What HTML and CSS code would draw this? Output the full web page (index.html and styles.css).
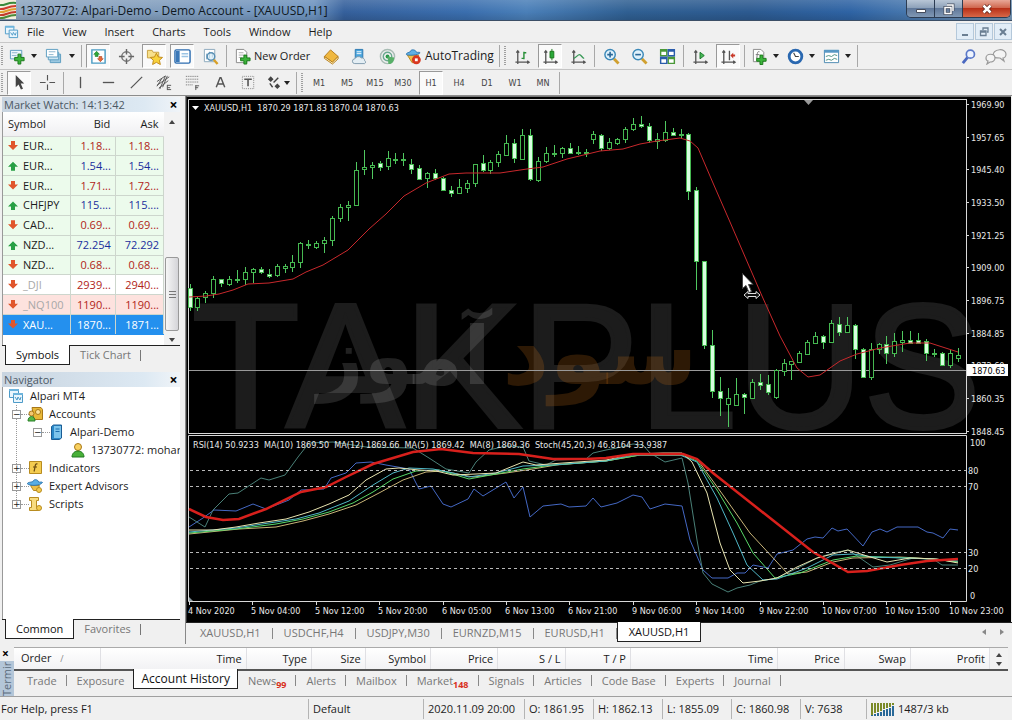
FILE: index.html
```html
<!DOCTYPE html>
<html lang="en">
<head>
<meta charset="utf-8">
<title>13730772: Alpari-Demo - Demo Account - [XAUUSD,H1]</title>
<link rel="stylesheet" href="styles.css">
</head>
<body>
<header class="titlebar">
  <svg class="logo" viewBox="0 0 16 19"><path fill="#f4efdc" d="M0 0h16v19H0z"/><g fill="none" stroke-width="2"><path stroke="#3a8a3a" d="M0 5c5 1 7-3 16-2"/><path stroke="#d23a2c" d="M0 9c5 1 7-3 16-3"/><path stroke="#e0a030" d="M0 12c5 1 7-3 16-3"/><path stroke="#c23a2c" d="M0 15c5 1 7-3 16-3"/><path stroke="#4a8a3a" d="M0 18c5 1 7-3 16-3"/></g></svg>
  <h1 class="title">13730772: Alpari-Demo - Demo Account - [XAUUSD,H1]</h1>
  <div class="winbtns">
    <button class="win" aria-label="Minimize"><svg viewBox="0 0 14 12"><path fill="#fff" stroke="#444c5c" d="M2.500 6.500h9v3h-9z"/></svg></button>
    <button class="win" aria-label="Restore"><svg viewBox="0 0 14 12"><path fill="none" stroke="#444c5c" stroke-width="3" d="M5 2h6v6M3 4.500h6v6H3z"/><path fill="none" stroke="#fff" stroke-width="1.500" d="M5 2h6v6M3 4.500h6v6H3z"/></svg></button>
    <button class="win close" aria-label="Close"><svg viewBox="0 0 14 12"><path stroke="#5a2018" stroke-width="4" d="M3.500 2.500l7 7m0-7l-7 7"/><path stroke="#fff" stroke-width="2.500" d="M3.500 2.500l7 7m0-7l-7 7"/></svg></button>
  </div>
</header>

<nav class="menubar">
  <svg class="appicon" viewBox="0 0 16 16"><path fill="#eaf6fd" stroke="#4e9bc8" d="M1.500 2.500h9v8h-9z"/><path fill="#6db4dc" d="M1 2h10v2H1z"/><path fill="#eaf6fd" stroke="#4e9bc8" d="M5.500 6.500h9v8h-9z"/><path fill="none" stroke="#4e9bc8" d="M7 9l2 3 1-3 2 3 1-3"/></svg>
  <button>File</button><button>View</button><button>Insert</button><button>Charts</button><button>Tools</button><button>Window</button><button>Help</button>
  <div class="mdibtns">
    <button aria-label="Minimize chart"><svg viewBox="0 0 12 12"><path stroke="#6a7e92" stroke-width="2" d="M3 9h6"/></svg></button>
    <button aria-label="Restore chart"><svg viewBox="0 0 12 12"><path fill="none" stroke="#6a7e92" stroke-width="1.300" d="M5 4V2h5v4H9M2.500 5h5.500v4.500H2.500zM2.500 6h5"/></svg></button>
    <button aria-label="Close chart"><svg viewBox="0 0 12 12"><path stroke="#6a7e92" stroke-width="2" d="M3 3l6 6m0-6L3 9"/></svg></button>
  </div>
</nav>

<div class="toolbar">
  <i class="grip"></i>
  <button class="drop" aria-label="New chart"><svg viewBox="0 0 18 18"><path fill="#eef7fc" stroke="#5a9cc0" d="M1.500 2.500h12v9h-12z"/><path stroke="#8ab4cc" d="M3 5h6M3 8h5"/><path fill="#3cb43c" stroke="#187818" d="M9.500 6.500h3v3.500H16v3.500h-3.500V17h-3v-3.500H6V10h3.500z"/></svg><i class="caret"></i></button>
  <button class="drop" aria-label="Profiles"><svg viewBox="0 0 18 18"><path fill="#9cc8e0" stroke="#5a9cc0" d="M5.500 6.500h11v9h-11z"/><path fill="#cfe6f2" stroke="#5a9cc0" d="M3.500 4.500h11v8h-11z"/><path fill="#fff" stroke="#5a9cc0" d="M1.500 1.500h12v8h-12z"/><path stroke="#8ab4cc" d="M4 4h7M4 7h5"/></svg><i class="caret"></i></button>
  <i class="sep"></i>
  <button class="pressed" aria-label="Market Watch"><svg viewBox="0 0 18 18"><path fill="#fff" stroke="#4a9cc4" stroke-width="1.500" d="M2 2h14v14H2z"/><path fill="#2ea838" stroke="#187828" stroke-width=".6" d="M7 3.500l3 3.200H8.500V9h-3V6.700H4z"/><path fill="#e86838" stroke="#a83818" stroke-width=".6" d="M11 14.500l3-3.200h-1.500V9h-3v2.300H8z"/></svg></button>
  <button aria-label="Data Window"><svg viewBox="0 0 18 18"><circle cx="9" cy="9" r="5" fill="none" stroke="#777" stroke-width="1.500"/><path stroke="#666" stroke-width="1.500" d="M9 1v6m0 4v6M1 9h6m4 0h6"/></svg></button>
  <button class="pressed" aria-label="Navigator"><svg viewBox="0 0 18 18"><path fill="#f7e08c" stroke="#c8a040" d="M1.500 2.500h5l1 2h6v6h-12z"/><path fill="#f8d23c" stroke="#c08818" d="M11 5.500l2 4 4.500.500-3.300 3 1 4.500-4.200-2.300-4 2.300.800-4.500-3.300-3 4.500-.500z"/></svg></button>
  <button class="pressed" aria-label="Terminal"><svg viewBox="0 0 18 18"><rect x="1" y="2" width="16" height="14" rx="1.500" fill="#fff" stroke="#2c6cb0" stroke-width="1.500"/><path fill="#3a78b8" d="M2 3h4v12H2z"/><path stroke="#9cc4e4" stroke-width="1.500" d="M8 6h7M8 9h7"/></svg></button>
  <button aria-label="Strategy Tester"><svg viewBox="0 0 18 18"><path fill="#fff" stroke="#8aa8bc" d="M2.500 1.500h11v13h-11z"/><path stroke="#6898b8" d="M5 12V6m3 5V4m3 6V5"/><circle cx="9.500" cy="9" r="4" fill="#d8ecf8" fill-opacity=".7" stroke="#5a90b4" stroke-width="1.500"/><path stroke="#d8a028" stroke-width="2.500" d="M12.500 12.500l4 4.500"/></svg></button>
  <i class="sep"></i>
  <button class="label order"><svg viewBox="0 0 18 18"><path fill="#fff" stroke="#888" d="M2.500 1.500h8l3 3v11h-11z"/><path stroke="#aaa" d="M5 5h5M5 7.500h6M5 10h3"/><path fill="#3cb43c" stroke="#187818" d="M10.500 7.500h3v3H17v3h-3.500V17h-3v-3.500H7v-3h3.500z"/></svg>New Order</button>
  <button aria-label="MetaEditor"><svg viewBox="0 0 18 18"><path fill="#f0b840" stroke="#b47a18" d="M8 2l8 7-6 6-8.500-6z"/><path fill="#fff0b8" stroke="#b47a18" d="M1.500 9L10 15l6-6v2.500l-6 5.500-8.500-6z"/></svg></button>
  <button aria-label="Market"><svg viewBox="0 0 18 18"><path fill="#4aa4dc" stroke="#2a78b0" d="M4.500 1.500h8v10h-8z"/><path stroke="#fff" d="M6 4h5M6 6h5"/><path fill="#e4eef4" stroke="#7f9aac" d="M4 16.500a2.500 2.500 0 0 1 0-5 4 3.500 0 0 1 7-1 3 3 0 0 1 3.500 3 1.700 1.700 0 0 1 0 3z"/></svg></button>
  <button aria-label="Signals"><svg viewBox="0 0 18 18"><g fill="none" stroke-width="1.500"><circle cx="9" cy="9" r="7.500" stroke="#a8bcb4"/><circle cx="9" cy="9" r="4.500" stroke="#6aa890"/></g><circle cx="9" cy="9" r="2" fill="#289848"/><path fill="#58b068" d="M9 9l1 8c5 0 6-4 6-7z"/></svg></button>
  <button class="label auto"><svg viewBox="0 0 18 18"><path fill="#f0c048" stroke="#b88a20" d="M2.500 7.500h12l-3 8h-4z"/><path fill="#60b0e4" stroke="#3278b0" d="M1.500 7C3 8 14 8 16 5c-1-1-3 0-4-.500-.500-3-6-3.500-6.500-.500C4 5 1 5 1.500 7z"/><circle cx="12" cy="12.500" r="4.700" fill="#d83820"/><path fill="#fff" d="M10.500 11h3v3h-3z"/></svg>AutoTrading</button>
  <i class="sep"></i>
  <i class="grip"></i>
  <button aria-label="Bar Chart"><svg viewBox="0 0 18 18"><path fill="none" stroke="#555" stroke-width="1.400" d="M4 3v14M1.500 15H16M2.500 5L4 3l1.500 2M14 13.500l2 1.500-2 1.500"/><path fill="none" stroke="#289038" stroke-width="1.500" d="M10.500 12V4M10.500 5H13M8 11h2.500"/></svg></button>
  <button class="pressed" aria-label="Candlesticks"><svg viewBox="0 0 18 18"><path fill="none" stroke="#555" stroke-width="1.400" d="M4 3v14M1.500 15H16M2.500 5L4 3l1.500 2M14 13.500l2 1.500-2 1.500"/><path stroke="#187818" d="M10.500 1v12"/><path fill="#28a838" stroke="#187818" d="M8.500 3.500h4v7h-4z"/></svg></button>
  <button aria-label="Line Chart"><svg viewBox="0 0 18 18"><path fill="none" stroke="#555" stroke-width="1.400" d="M4 3v14M1.500 15H16M2.500 5L4 3l1.500 2M14 13.500l2 1.500-2 1.500"/><path fill="none" stroke="#3a9a58" stroke-width="1.400" d="M4 11c3-1 4-4 6-4s3 4 5 4"/></svg></button>
  <i class="sep"></i>
  <button aria-label="Zoom In"><svg viewBox="0 0 18 18"><path stroke="#d0a030" stroke-width="3" d="M11.500 11.500l5 5"/><circle cx="7.500" cy="7" r="5.500" fill="#e0f2fc" stroke="#3a88b8" stroke-width="1.500"/><path stroke="#2a6898" stroke-width="1.700" d="M4.500 7h6m-3-3v6"/></svg></button>
  <button aria-label="Zoom Out"><svg viewBox="0 0 18 18"><path stroke="#d0a030" stroke-width="3" d="M11.500 11.500l5 5"/><circle cx="7.500" cy="7" r="5.500" fill="#e0f2fc" stroke="#3a88b8" stroke-width="1.500"/><path stroke="#2a6898" stroke-width="1.700" d="M4.500 7h6"/></svg></button>
  <button aria-label="Tile Windows"><svg viewBox="0 0 18 18"><path fill="#4a9838" d="M1 1h8v8H1zM9 9h8v8H9z"/><path fill="#2a5cac" d="M9 1h8v8H9zM1 9h8v8H1z"/><path fill="#fff" d="M2.500 4h5v3.500h-5zM10.500 4h5v3.500h-5zM2.500 12h5v3.500h-5zM10.500 12h5v3.500h-5z"/></svg></button>
  <i class="sep"></i>
  <button aria-label="Auto Scroll"><svg viewBox="0 0 18 18"><path fill="none" stroke="#555" stroke-width="1.400" d="M4 3v14M1.500 15H16M2.500 5L4 3l1.500 2M14 13.500l2 1.500-2 1.500"/><path fill="#48b858" stroke="#187828" d="M8.500 4.500v7l4.500-3.500z"/></svg></button>
  <button class="pressed" aria-label="Chart Shift"><svg viewBox="0 0 18 18"><path fill="none" stroke="#555" stroke-width="1.400" d="M4 3v14M1.500 15H16M2.500 5L4 3l1.500 2M14 13.500l2 1.500-2 1.500M10 3v10"/><path fill="#c83828" d="M11 8l3-3v2h2v2h-2v2z"/></svg></button>
  <i class="sep"></i>
  <button class="drop" aria-label="Indicators"><svg viewBox="0 0 18 18"><path fill="#fff" stroke="#888" d="M2.500 1.500h8l3 3v10h-11z"/><path fill="none" stroke="#777" d="M9 4c-3-1-2 3-3 7M5 7h4"/><path fill="#3cb43c" stroke="#187818" d="M9.500 7.500h3V11H16v3h-3.500v3.500h-3V14H6v-3h3.500z"/></svg><i class="caret"></i></button>
  <button class="drop" aria-label="Periods"><svg viewBox="0 0 18 18"><circle cx="9" cy="9" r="6.700" fill="#fff" stroke="#2a68b0" stroke-width="3"/><path fill="none" stroke="#444" stroke-width="1.200" d="M7 5l2 4h3.500"/></svg><i class="caret"></i></button>
  <button class="drop" aria-label="Templates"><svg viewBox="0 0 18 18"><path fill="#fff" stroke="#4a88b0" d="M1.500 2.500h15v13h-15z"/><path fill="#5898c4" d="M1 2h16v3H1z"/><path fill="none" stroke="#4a9080" d="M3 9l3-1 3 1 3-2 3 1M3 13l3-1 3 1 3-2 3 1"/></svg><i class="caret"></i></button>
  <i class="sep"></i>
  <div class="tools">
    <button aria-label="Search"><svg viewBox="0 0 18 18"><path stroke="#4a68c0" stroke-width="3" d="M8 10l-5 6"/><circle cx="11" cy="6.500" r="4.300" fill="#eef4ff" stroke="#5a78c8" stroke-width="1.800"/></svg></button>
    <button aria-label="Community"><svg class="wide" viewBox="0 0 22 18"><g fill="#f4f4f4" stroke="#999" stroke-width="1.200"><path d="M8 9c0-8 13-8 13-2 0 3-2 4-3 4l1 3-4-3c-4 0-7 0-7-2z"/><path d="M1 11c0-5 9-5 9 0 0 3-3 4-5 4l-3 2 1-3c-1 0-2-1-2-3z"/></g></svg></button>
  </div>
</div>

<div class="toolbar second">
  <i class="grip"></i>
  <button class="pressed" aria-label="Cursor"><svg viewBox="0 0 18 18"><path fill="#444" d="M5 1v13l3-3 2.500 5.500 2.200-1L10.300 10H14z"/></svg></button>
  <button aria-label="Crosshair"><svg viewBox="0 0 18 18"><path stroke="#555" stroke-width="1.200" d="M9 1v6m0 4v6M1 9h6m4 0h6"/></svg></button>
  <i class="sep"></i>
  <button aria-label="Vertical line"><svg viewBox="0 0 18 18"><path stroke="#555" stroke-width="1.400" d="M9 3v12"/></svg></button>
  <button aria-label="Horizontal line"><svg viewBox="0 0 18 18"><path stroke="#555" stroke-width="1.400" d="M3 9h12"/></svg></button>
  <button aria-label="Trendline"><svg viewBox="0 0 18 18"><path stroke="#555" stroke-width="1.300" d="M3 15L15 3"/></svg></button>
  <button aria-label="Equidistant channel"><svg viewBox="0 0 18 18"><path stroke="#555" d="M1 8l9-6M1 12l13-9M3 15l10-8M4 16l6-14M7 14l5-12M1 13l5-8M12 11.500v5.500M12 12h4M12 14.500h3M12 16.500h4"/></svg></button>
  <button aria-label="Fibonacci"><svg viewBox="0 0 18 18"><path stroke="#666" stroke-dasharray="1 1" d="M2 2.500h13M2 5.500h13M2 8.500h13M2 11.500h8"/><path stroke="#555" d="M12.500 12v5M12 12.500h4M12 14.500h3"/></svg></button>
  <button aria-label="Text"><svg viewBox="0 0 18 18"><path fill="none" stroke="#555" stroke-width="1.500" d="M4.500 14L8.500 4h1l4 10M6 10.500h6"/></svg></button>
  <button aria-label="Text label"><svg viewBox="0 0 18 18"><path fill="none" stroke="#888" stroke-dasharray="1 1" d="M2.500 2.500h12v13h-12z"/><path stroke="#555" stroke-width="1.700" d="M4.500 5.500h8M8.500 5v8"/></svg></button>
  <button class="drop shapes" aria-label="Arrows"><svg viewBox="0 0 18 18"><path fill="#444" d="M5 2.500L8 5.500 5 8.500 2 5.500zM12 10l3 3-3 3-3-3z"/><path fill="none" stroke="#444" stroke-width="1.500" d="M8 9l5-5M4 10l3 4"/></svg><i class="caret"></i></button>
  <i class="sep"></i>
  <i class="grip"></i>
  <button class="tf">M1</button><button class="tf">M5</button><button class="tf">M15</button><button class="tf">M30</button><button class="tf pressed">H1</button><button class="tf">H4</button><button class="tf">D1</button><button class="tf">W1</button><button class="tf">MN</button>
  <i class="sep"></i>
</div>

<main class="work">
  <aside class="side">
    <section class="panel">
      <header class="phead"><h2>Market Watch: 14:13:42</h2><button aria-label="Close Market Watch">×</button></header>
      <div class="pbody watch">
        <table class="quotes">
          <colgroup><col class="c1"><col class="c2"><col class="c3"></colgroup>
          <thead><tr><th>Symbol</th><th>Bid</th><th>Ask</th></tr></thead>
          <tbody>
            <tr class="dn"><td>EUR...</td><td>1.18...</td><td>1.18...</td></tr>
            <tr class="up"><td>EUR...</td><td>1.54...</td><td>1.54...</td></tr>
            <tr class="dn"><td>EUR...</td><td>1.71...</td><td>1.72...</td></tr>
            <tr class="up"><td>CHFJPY</td><td>115....</td><td>115....</td></tr>
            <tr class="dn"><td>CAD...</td><td>0.69...</td><td>0.69...</td></tr>
            <tr class="up"><td>NZD...</td><td>72.254</td><td>72.292</td></tr>
            <tr class="dn"><td>NZD...</td><td>0.68...</td><td>0.68...</td></tr>
            <tr class="dn off"><td>_DJI</td><td>2939...</td><td>2940...</td></tr>
            <tr class="dn off pink"><td>_NQ100</td><td>1190...</td><td>1190...</td></tr>
            <tr class="dn sel"><td>XAU...</td><td>1870...</td><td>1871...</td></tr>
          </tbody>
        </table>
        <div class="vscroll"><i class="tri up"></i><div class="track"><div class="thumb"></div></div><i class="tri down"></i></div>
      </div>
      <div class="ptabs"><button class="on">Symbols</button><button>Tick Chart</button></div>
    </section>
    <section class="panel grow">
      <header class="phead"><h2>Navigator</h2><button aria-label="Close Navigator">×</button></header>
      <ul class="pbody tree">
        <li class="root"><svg viewBox="0 0 16 16"><path fill="#eaf6fd" stroke="#4e9bc8" d="M1.500 1.500h9v8h-9z"/><path fill="#6db4dc" d="M1 1h10v2H1z"/><path fill="#eaf6fd" stroke="#4e9bc8" d="M5.500 5.500h9v9h-9z"/><path fill="#6db4dc" d="M5 5h10v2H5z"/><path fill="none" stroke="#4e9bc8" d="M7 9l2 3 1-3 2 3 1-3"/></svg>Alpari MT4</li>
        <li class="l1"><i class="box">−</i><svg viewBox="0 0 16 16"><path fill="#e8b838" stroke="#a87818" d="M5 1.500h9l1.500 2v10H7z"/><circle cx="11" cy="6" r="2.500" fill="#fbe49c" stroke="#a87818"/><circle cx="4.500" cy="7.500" r="2.500" fill="#f4c870" stroke="#a87818"/><path fill="#58b848" stroke="#288028" d="M1 15c0-6 7-6 7 0z"/></svg>Accounts</li>
        <li class="l2"><i class="box">−</i><svg viewBox="0 0 16 16"><path fill="#2a88c8" stroke="#1a5c94" d="M3.500 2.500l2-1.500h8v13l-2 1.500h-8z"/><path fill="#7cc4ec" d="M6 2h7v12H6z"/><path stroke="#1a6cac" d="M7.500 5h4M7.500 7.500h4"/></svg>Alpari-Demo</li>
        <li class="l3"><svg viewBox="0 0 16 16"><circle cx="8" cy="5" r="3.500" fill="#f8d060" stroke="#a87818"/><path fill="#48b038" stroke="#207820" d="M2 15c0-8 12-8 12 0z"/></svg>13730772: mohar</li>
        <li class="l1"><i class="box">+</i><svg viewBox="0 0 16 16"><path fill="#f4cc50" stroke="#b88c20" d="M2.500 1.500h12v12h-12z"/><path fill="none" stroke="#6a4a10" stroke-width="1.200" d="M10.500 4c-3-1-2 3-3.500 7.500M6 7h4"/></svg>Indicators</li>
        <li class="l1"><i class="box">+</i><svg viewBox="0 0 16 16"><path fill="#f0c048" stroke="#b88a20" d="M3.500 7.500h9l-2 5h-4z"/><path fill="#5aaee4" stroke="#3278b0" d="M.500 6C3 8 13 8 15.500 4.500c-1-1-3 0-4-.500-.500-3-5-3-5.500-.500C4 4.500 0 4 .500 6z"/><circle cx="12" cy="12" r="2.500" fill="#f4cc50" stroke="#b88c20"/></svg>Expert Advisors</li>
        <li class="l1"><i class="box">+</i><svg viewBox="0 0 16 16"><path fill="#f8dc80" stroke="#b88c20" d="M2.500 1.500h9v3h-2v7h2v3h-9v-3h2v-7h-2z"/><circle cx="12" cy="12" r="2.500" fill="#f4cc50" stroke="#b88c20"/></svg>Scripts</li>
      </ul>
      <div class="ptabs"><button class="on">Common</button><button>Favorites</button></div>
    </section>
  </aside>

  <section class="chartwin">
    <div class="chartbox">
      <svg id="chart" viewBox="187 97 824 525" role="img" aria-label="XAUUSD H1 candlestick chart">
        <g class="mark">
          <text class="latin" x="192" y="427">TAKPLUS</text>
          <text class="fa gold" x="600" y="384">سود</text>
          <text class="fa grey" x="404" y="384">آموز</text>
        </g>
        <path class="frame" d="M188.500 433.500v-334h777.500M188.500 433.500h778M966.500 99v335M188.500 601.500v-166h778v166z"/>
        <path class="bid" d="M189 370.500h777"/>
        <path class="shift" d="M804 100h9l-4.500 5z"/>
        <g id="candles"></g>
        <g id="lines"></g>
        <path class="level" d="M190 470.500h776M190 486.500h776M190 552.500h776M190 568.500h776"/>
        <path class="caretdown" d="M192 106h7l-3.500 4z"/>
        <g class="txt">
          <text x="204" y="111" xml:space="preserve">XAUUSD,H1  1870.29 1871.83 1870.04 1870.63</text>
          <text x="193" y="448" xml:space="preserve">RSI(14) 50.9233  MA(10) 1869.50  MA(12) 1869.66  MA(5) 1869.42  MA(8) 1869.36  Stoch(45,20,3) 46.8164 33.9387</text>
        </g>
        <g class="txt" id="axes"></g>
        <path class="tag" d="M967 364h41v12h-41z"/>
        <text class="tagtxt" x="972" y="374">1870.63</text>
        <path class="corner" d="M189 597v4h4z"/>
        <g class="pointer"><path d="M742.500 273.500v15l3.500-3 3 7 2.500-1-3-7h4.500z"/><path class="resize" d="M744 295l4-3.500v2h8v-2l4 3.500-4 3.500v-2h-8v2z"/></g>
      </svg>
    </div>
    <div class="charttabs">
      <button>XAUUSD,H1</button><button>USDCHF,H4</button><button>USDJPY,M30</button><button>EURNZD,M15</button><button>EURUSD,H1</button><button class="on">XAUUSD,H1</button>
      <div class="arrows"><i class="tri left"></i><i class="tri right"></i></div>
    </div>
  </section>
</main>

<section class="terminal">
  <div class="tside"><button aria-label="Close Terminal">×</button><span>Termir</span></div>
  <div class="tmain">
    <div class="thead">
      <table class="orders">
        <colgroup><col style="width:8.900%"><col style="width:14.900%"><col style="width:6.700%"><col style="width:5.500%"><col style="width:6.700%"><col style="width:6.900%"><col style="width:6.900%"><col style="width:6.700%"><col style="width:15.100%"><col style="width:6.800%"><col style="width:6.800%"><col style="width:8.100%"></colgroup>
        <thead><tr><th>Order <small>/</small></th><th>Time</th><th>Type</th><th>Size</th><th>Symbol</th><th>Price</th><th>S / L</th><th>T / P</th><th>Time</th><th>Price</th><th>Swap</th><th>Profit</th></tr></thead>
      </table>
      <div class="spin"><i class="tri up"></i><i class="tri down"></i></div>
    </div>
    <div class="ttabs">
      <button>Trade</button><button>Exposure</button><button class="on">Account History</button><button>News<sub>99</sub></button><button>Alerts</button><button>Mailbox</button><button>Market<sub>148</sub></button><button>Signals</button><button>Articles</button><button>Code Base</button><button>Experts</button><button>Journal</button>
    </div>
  </div>
</section>

<footer class="status">
  <span class="help">For Help, press F1</span>
  <span class="s-def">Default</span>
  <span class="s-date">2020.11.09 20:00</span>
  <span class="s-n">O: 1861.95</span>
  <span class="s-n">H: 1862.13</span>
  <span class="s-n">L: 1855.09</span>
  <span class="s-n">C: 1860.98</span>
  <span class="s-v">V: 7638</span>
  <span class="s-net"><svg viewBox="0 0 24 14"><path stroke="#7a8a28" stroke-width="2" d="M1 1v12M4 1v10M7 1v9M10 1v8M13 1v6M16 1v5M19 1v4M22 1v2"/><path stroke="#286898" stroke-width="2" d="M1 13v1M4 12v2M7 11v3M10 10v4M13 8v6M16 7v7M19 6v8M22 4v10"/></svg>1487/3 kb</span>
</footer>
<script src="chart.js"></script>
</body>
</html>
```

FILE: styles.css
```css
* { box-sizing: border-box; }

body {
  margin: 0;
  min-height: 100vh;
  display: flex;
  flex-direction: column;
  background: #f0f0f0;
  color: #1c1c1c;
  font: 11px/14px "Open Sans", "Noto Sans", sans-serif;
  overflow: hidden;
}

button {
  margin: 0;
  padding: 0;
  border: 0;
  background: none;
  color: inherit;
  font: inherit;
  white-space: nowrap;
}

svg { display: block; }
h1, h2 { margin: 0; font: inherit; white-space: nowrap; }

.tri { display: block; width: 0; height: 0; border: 3px solid transparent; }
.tri.up { border-top: 0; border-bottom: 4px solid #444; }
.tri.down { border-bottom: 0; border-top: 4px solid #444; }
.tri.left { border-left: 0; border-right: 4px solid #888; }
.tri.right { border-right: 0; border-left: 4px solid #888; }

/* Title bar */
.titlebar {
  display: flex;
  align-items: flex-start;
  height: 21px;
  border-bottom: 1px solid #3c4f66;
  background:
    linear-gradient(180deg, rgba(255,255,255,.15), rgba(255,255,255,0) 60%, rgba(0,0,0,.12)),
    linear-gradient(90deg, #8ea6c0 0, #7f9cbd 18%, #6d93bf 31%, #35609c 34%, #3a6eae 46%, #4a7fb8 52%, #2f5f92 62%, #2c5a90 74%, #2e63a4 84%, #4878ae 90%, #7898b8 100%);
}
.logo { width: 16px; height: 19px; }
.title { margin-left: 4px; font-size: 12px; line-height: 21px; color: #101820; flex: 1; }
.winbtns { display: flex; height: 18px; margin-right: 1px; border: 1px solid #2c3c52; border-top: 0; border-radius: 0 0 5px 5px; overflow: hidden; }
.win { width: 28px; display: grid; place-items: center; background: linear-gradient(#b8c6d6, #8ea2ba 45%, #60789a 50%, #8098b4); border-right: 1px solid #2c3c52; }
.win svg { width: 14px; height: 12px; }
.win.close { width: 47px; border: 0; background: linear-gradient(#e8a898, #d06850 45%, #b83018 50%, #d86848); }

/* Menu */
.menubar { display: flex; align-items: center; height: 22px; padding-left: 4px; gap: 18px; border-bottom: 1px solid #c8c8c8; }
.appicon { width: 15px; height: 15px; margin-right: -10px; }
.mdibtns { display: flex; margin-left: auto; gap: 1px; }
.mdibtns button { width: 18px; height: 17px; display: grid; place-items: center; border: 1px solid #b4c8da; background: #e2edf7; }
.mdibtns svg { width: 12px; height: 12px; }

/* Toolbars */
.toolbar { display: flex; align-items: center; gap: 4px; height: 27px; padding-left: 1px; border-bottom: 1px solid #c4c4c4; }
.toolbar.second { height: 26px; border-bottom-color: #8c8c8c; }
.grip { width: 2px; height: 20px; background: repeating-linear-gradient(#a0a0a0 0 1px, transparent 1px 2px); }
.sep { width: 1px; height: 22px; background: #a8a8a8; }
.toolbar button { flex: none; display: flex; align-items: center; justify-content: center; width: 24px; height: 24px; }
.toolbar svg { flex: none; width: 17px; height: 17px; }
.toolbar .pressed { background: #fafafa; border: 1px solid #fff; border-top-color: #999; border-left-color: #999; }
.toolbar .drop { width: 32px; justify-content: space-between; padding: 0 2px; }
.toolbar .drop[aria-label="Profiles"] { width: 34px; }
.toolbar .shapes { width: 28px; }
.toolbar .label { gap: 3px; justify-content: flex-start; }
.toolbar .order { width: 84px; padding-left: 3px; }
.toolbar .auto { width: 92px; padding-left: 2px; font-size: 12px; }
.caret { border: 3px solid transparent; border-top: 4px solid #222; border-bottom: 0; }
.tools { display: flex; gap: 4px; margin: 0 4px 0 auto; }
.toolbar .wide { width: 22px; height: 18px; }
.toolbar .tf { font-family: "DejaVu Sans Condensed", "Noto Sans", sans-serif; font-size: 9px; color: #444; }

/* Work area */
.work { flex: 1; display: flex; min-height: 0; }
.side { width: 186px; flex: none; display: flex; flex-direction: column; gap: 7px; padding: 1px 5px 5px 2px; border-right: 1px solid #888; }
.panel { display: flex; flex-direction: column; }
.panel.grow { flex: 1; }
.phead { display: flex; align-items: center; justify-content: space-between; height: 15px; padding: 0 2px; background: linear-gradient(90deg, #c8d4e0, #dde9f3 80%, #f0f4f8); color: #4c5864; }
.phead button { width: 9px; color: #000; font-size: 14px; font-weight: 700; line-height: 12px; }
.pbody { background: #fff; border-left: 1px solid #999; }
.watch { display: flex; height: 233px; }
.quotes { flex: 1; height: 223px; border-collapse: collapse; table-layout: fixed; }
.quotes .c1 { width: 42%; }
.quotes .c2 { width: 28%; }
.quotes th { height: 24px; padding: 0 5px; font-weight: 400; text-align: right; background: linear-gradient(#fff, #f0f0f2); border-bottom: 1px solid #d8d8d8; }
.quotes th:first-child { text-align: left; }
.quotes td { padding: 0 4px 0 3px; text-align: right; line-height: 12px; background: #ecfbec; border-bottom: 1px solid #cdd6cd; border-right: 1px solid #cdd6cd; white-space: nowrap; }
.quotes td:first-child { text-align: left; }
.quotes td:first-child::before { content: ""; display: inline-block; width: 10px; height: 10px; margin: 0 5px 0 2px; vertical-align: -1px; background: #e0562c; clip-path: polygon(30% 0, 70% 0, 70% 40%, 100% 40%, 50% 90%, 0 40%, 30% 40%); }
.quotes .up td:first-child::before { background: #28a045; clip-path: polygon(50% 10%, 100% 60%, 70% 60%, 70% 100%, 30% 100%, 30% 60%, 0 60%); }
.dn td + td { color: #b02418; }
.up td + td { color: #1a2e9c; }
.off td:first-child { color: #a8a8a8; }
.quotes .off td { background: #fff; }
.quotes .pink td { background: #fde2de; }
.quotes .sel td { background: #2490ee; color: #fff; border-bottom-color: #2490ee; }
.vscroll { width: 16px; padding: 8px 1px 3px; display: flex; flex-direction: column; align-items: center; background: #f2f2f2; }
.track { flex: 1; width: 100%; display: flex; flex-direction: column; justify-content: flex-end; padding-bottom: 7px; }
.thumb { height: 74px; border: 1px solid #999; border-radius: 2px; background: linear-gradient(transparent 33px, #777 33px 34px, transparent 34px 36px, #777 36px 37px, transparent 37px 39px, #777 39px 40px, transparent 40px) 50% 0 / 7px 100% no-repeat, linear-gradient(90deg, #f6f6f6, #d4d4d8); }
.ptabs { display: flex; height: 20px; padding-left: 3px; border-top: 1px solid #222; color: #777; }
.ptabs button { padding: 0 10px; height: 18px; position: relative; }
.ptabs button::after { content: ""; position: absolute; right: 0; top: 4px; height: 11px; border-right: 1px solid #777; }
.ptabs .on, .charttabs .on, .ttabs .on { color: #111; background: #fff; border: 1px solid #222; border-top: 0; }
.ptabs .on { margin-top: -1px; height: 20px; }
.ptabs .on::after { content: none; }

.tree { flex: 1; margin: 0; padding: 0; list-style: none; overflow: hidden; background: repeating-linear-gradient(#999 0 1px, #fff 1px 2px) 13px 18px / 1px 100px no-repeat, #fff; }
.tree li { display: flex; align-items: center; height: 18px; gap: 6px; white-space: nowrap; }
.tree svg { width: 16px; height: 16px; flex: none; }
.tree .root { padding-left: 5px; }
.tree .l1 { padding-left: 9px; }
.tree .l2 { padding-left: 30px; }
.tree .l3 { padding-left: 67px; gap: 5px; }
.box { width: 9px; height: 9px; flex: none; border: 1px solid #999; background: #fff; font: 9px/7px "DejaVu Sans", sans-serif; text-align: center; position: relative; }
.box::after { content: ""; position: absolute; left: 8px; top: 3px; width: 8px; border-top: 1px dotted #999; }

/* Chart */
.chartwin { flex: 1; min-width: 0; display: flex; flex-direction: column; }
.chartbox { flex: 1; min-height: 0; margin-right: 1px; background: #000; border-top: 1px solid #777; border-left: 1px solid #333; }
#chart { width: 100%; height: 100%; }
.latin { font: 176px "Liberation Sans", sans-serif; fill: #1c1c1c; stroke: #1c1c1c; stroke-width: 4; }
.fa { font: 700 92px "DejaVu Sans", sans-serif; text-anchor: middle; }
.gold { fill: rgba(190,105,20,.24); }
.grey { font-size: 80px; fill: rgba(255,255,255,.13); }
.frame { fill: none; stroke: #d8d8d8; }
.bid { stroke: #9a9a9a; }
.shift { fill: #9a9a9a; }
.caretdown { fill: #fff; }
.level { stroke: #b8b8b8; stroke-dasharray: 3 3; }
.txt text, .tagtxt { font: 9px "DejaVu Sans Condensed", "Noto Sans", sans-serif; fill: #e8e8e8; }
.tick { stroke: #d8d8d8; }
.tag { fill: #fff; }
.tagtxt { fill: #000; }
.corner { fill: #8898a0; }
.candle { stroke: #45b850; fill: #000; }
.candle.full { fill: #d8ffe0; }
.candle.wick { stroke: #50c860; }
.line { fill: none; stroke-width: 1; }
.pointer { fill: #fff; stroke: #444; stroke-width: 1; }
.resize { fill: #111; stroke: #e0e0e0; }
.charttabs { display: flex; height: 22px; padding-left: 3px; border-top: 1px solid #222; color: #777; }
.charttabs button { height: 20px; padding: 0 12px 0 11px; position: relative; }
.charttabs button:not(.on)::after { content: ""; position: absolute; right: 0; top: 5px; height: 11px; border-right: 1px solid #888; }
.charttabs .on { margin-top: -1px; height: 20px; padding: 0 11px; }
.arrows { margin: 6px 8px 0 auto; display: flex; gap: 14px; }

/* Terminal */
.terminal { display: flex; height: 50px; margin-top: 3px; border-bottom: 1px solid #a0a0a0; }
.tside { width: 14px; background: linear-gradient(#f0f0f0 14px, #b4c6d8 14px); color: #5a6a7a; }
.tside button { display: block; width: 11px; height: 14px; line-height: 14px; font-size: 12px; font-weight: 700; color: #000; }
.tside span { display: block; height: 35px; writing-mode: vertical-rl; transform: rotate(180deg); line-height: 14px; }
.tmain { flex: 1; margin-right: 4px; }
.thead { display: flex; height: 24px; background: linear-gradient(#fff, #f2f2f4); border-top: 1px solid #aaa; border-bottom: 2px solid #555; }
.orders { flex: 1; table-layout: fixed; border-collapse: collapse; }
.orders th { padding: 0 4px 0 7px; font-weight: 400; text-align: right; white-space: nowrap; border-right: 1px solid #e0e0e4; }
.orders th:first-child { text-align: left; }
.orders small { margin-left: 6px; color: #888; font-size: 9px; }
.spin { width: 18px; display: flex; flex-direction: column; align-items: center; justify-content: space-between; padding: 5px 0 3px; background: #f2f2f2; }
.ttabs { display: flex; color: #777; padding-left: 3px; }
.ttabs button { height: 19px; padding: 0 10px; position: relative; }
.ttabs button:not(.on)::after { content: ""; position: absolute; right: 0; top: 4px; height: 11px; border-right: 1px solid #888; }
.ttabs button:nth-child(2) { padding-right: 9px; }
.ttabs button:nth-child(2)::after { content: none; }
.ttabs .on { margin-top: -2px; height: 20px; padding: 0 7px; font-size: 12px; }
.ttabs sub { color: #d83020; font-size: 9px; font-weight: 700; line-height: 0; }

/* Status bar */
.status { display: flex; align-items: center; height: 23px; padding-left: 1px; }
.status span { height: 20px; line-height: 20px; border-left: 1px solid #b4b4b4; padding-left: 4px; white-space: nowrap; }
.status .help { flex: 1; border: 0; padding: 0; }
.s-def { width: 115px; }
.s-date { width: 101px; }
.s-n { width: 69px; }
.s-v { width: 66px; }
.status .s-net { width: 146px; display: flex; align-items: center; gap: 3px; }
.s-net svg { width: 24px; height: 14px; }
```

FILE: chart.js
```js
const NS = 'http://www.w3.org/2000/svg';
const add = (parent, tag, attrs, text) => {
  const el = document.createElementNS(NS, tag);
  for (const k in attrs) el.setAttribute(k, attrs[k]);
  if (text) el.textContent = text;
  document.getElementById(parent).appendChild(el);
};

// Each candle: high, body top, body bottom, low, 1 when the candle is bearish.
const candles = [
  [284,288,307,311,1],[296,298,307,311,0],[291,293,297,303,0],[276,279,293,298,0],[279,279,283,287,1],[276,279,284,286,0],[270,279,280,283,0],[267,272,279,285,0],
  [268,269,272,283,0],[267,269,272,274,1],[269,274,276,278,1],[264,266,275,277,0],[264,266,268,273,0],[255,262,267,272,0],[242,243,262,268,0],[240,244,245,249,1],
  [241,243,247,249,0],[237,240,243,253,0],[216,218,240,246,0],[204,207,218,222,0],[201,205,207,221,0],[162,170,205,205,0],[150,167,169,175,0],[162,165,167,179,0],
  [161,163,167,171,1],[151,158,166,170,0],[153,159,160,164,1],[153,159,160,166,0],[159,164,169,174,1],[165,168,179,180,1],[172,173,178,188,0],[169,173,178,180,1],
  [177,178,190,191,1],[186,190,193,197,1],[179,187,193,194,0],[180,183,188,193,0],[164,164,183,187,0],[155,163,170,172,1],[160,162,170,174,0],[151,154,162,167,0],
  [135,143,155,156,0],[139,143,158,163,1],[129,135,159,160,0],[129,135,179,181,1],[157,161,180,182,0],[147,153,161,163,0],[145,153,154,157,0],[147,148,153,158,0],
  [143,148,153,154,1],[146,152,153,155,0],[149,152,153,157,0],[131,134,139,144,0],[134,135,148,151,1],[138,142,148,150,0],[138,139,143,145,0],[127,129,139,143,0],
  [118,124,129,131,0],[116,124,126,128,1],[123,126,140,143,1],[133,139,141,149,0],[121,132,140,142,0],[128,132,135,136,1],[129,134,135,138,0],[133,134,191,200,1],
  [187,190,261,290,1],[261,261,345,349,1],[330,345,391,398,1],[377,391,398,416,1],[388,398,404,427,0],[378,394,405,406,0],[393,394,397,414,1],[379,382,398,399,0],
  [374,382,385,390,1],[375,384,392,395,1],[369,370,397,399,0],[359,363,371,376,0],[361,361,364,380,0],[351,353,362,363,0],[340,342,354,355,0],[332,336,343,344,0],
  [335,336,342,349,1],[320,323,342,343,0],[317,324,332,336,1],[317,325,332,333,0],[324,325,349,359,1],[348,349,377,378,1],[343,349,377,380,0],[343,344,349,354,0],
  [336,344,353,364,1],[333,341,353,357,0],[331,340,342,352,0],[331,340,343,344,1],[333,340,343,344,1],[339,341,353,361,1],[349,353,354,357,0],[352,353,365,366,1],
  [350,353,365,368,0],[348,355,358,362,0]
];
candles.forEach(([h, t, b, l, full], i) => {
  const x = Math.round(189.5 + i * 7.92) + 0.5;
  add('candles', 'path', { class: 'candle wick', d: `M${x} ${h}V${l}` });
  add('candles', 'rect', { class: full ? 'candle full' : 'candle', x: x - 2, y: t + 0.5, width: 4, height: Math.max(b - t, 1) });
});

const lines = [
  ['#c8282c', 1, '189,297 206,296 219,294 233,290 248,284 269,283 293,279 306,272 323,265 348,250 369,229 386,214 404,196 426,183 449,174 466,173 500,173 527,169 543,167 567,159 600,151 623,149 640,144 657,141 680,138 690,141 698,148 713,183 730,222 762,296 780,336 797,368 808,377 820,375 840,361 857,354 880,348 910,343 930,343 958,352'],
  ['#4468c4', 1, '189,527 203,518 214,510 236,511 253,504 266,509 289,500 301,490 324,489 331,478 346,473 356,463 371,462 386,465 409,469 419,489 431,486 443,504 451,507 468,499 474,489 483,496 506,482 514,498 523,487 530,517 543,506 561,504 569,507 586,506 593,498 601,507 617,503 633,495 642,497 650,509 665,504 682,506 690,540 703,570 712,578 728,578 737,573 745,573 753,565 768,568 777,554 793,550 807,539 815,537 823,538 832,528 838,531 847,529 863,546 872,532 880,529 887,532 897,527 918,527 927,532 933,533 943,538 950,529 958,530'],
  ['#4a8078', 1, '189,517 205,527 213,510 229,494 238,493 261,478 269,480 285,475 298,457 309,443 333,442 366,447 413,448 429,458 446,469 469,473 476,462 489,450 506,446 523,447 529,461 546,465 556,460 586,459 593,453 606,450 617,448 633,444 643,445 650,453 665,462 682,458 688,483 697,540 703,573 712,584 728,592 737,588 750,585 760,581 777,578 800,567 817,558 833,553 848,550 860,558 873,567 890,565 913,558 933,559 942,565 958,565'],
  ['#c8b478', 1, '189,534 239,529 276,527 303,521 329,514 356,505 379,493 403,480 426,472 443,471 473,477 506,473 533,469 556,465 606,461 640,455 682,455 697,459 723,495 750,533 788,574 807,572 833,562 853,558 900,557 933,559 958,562'],
  ['#58d868', 1, '189,533 236,529 276,524 303,519 329,512 353,503 373,492 393,479 416,471 439,470 469,479 496,474 523,469 553,465 606,461 640,455 682,455 697,461 717,490 737,523 753,553 775,578 800,573 833,560 857,556 933,559 958,562'],
  ['#50b8c8', 1, '189,532 236,528 269,523 296,519 319,513 349,501 373,485 393,473 409,468 433,469 453,473 469,477 496,473 523,466 553,465 606,461 633,455 680,455 697,462 717,498 733,533 747,565 763,580 777,579 807,568 833,555 853,554 873,557 933,559 958,561'],
  ['#e8e4b0', 1, '189,530 213,530 236,527 259,523 286,519 309,512 329,504 349,495 366,480 386,469 399,468 419,470 436,471 453,475 476,474 496,473 523,462 536,465 563,463 606,460 633,454 663,453 682,453 692,462 707,493 720,543 730,570 743,583 760,581 777,578 797,567 817,558 848,550 867,556 887,562 910,558 937,559 958,563'],
  ['#d8201c', 2.5, '189,509 206,517 223,520 239,519 266,509 301,492 326,487 346,477 373,464 393,458 413,452 441,449 473,453 519,454 553,459 586,459 606,458 633,454 663,454 683,454 697,459 713,473 813,552 848,572 867,571 900,565 927,561 958,559']
];
lines.forEach(([stroke, w, points]) => add('lines', 'polyline', { class: 'line', points, style: `stroke:${stroke};stroke-width:${w}` }));

const tick = (d) => add('axes', 'path', { class: 'tick', d });
['1969.90', '1957.65', '1945.40', '1933.50', '1921.25', '1909.00', '1896.75', '1884.85', '1872.60', '1860.35', '1848.45'].forEach((p, i) => {
  const y = Math.round(104 + i * 32.67);
  tick(`M967 ${y + 0.5}h2`);
  add('axes', 'text', { x: 971, y: y + 4 }, p);
});
[['100', 442], ['80', 470], ['70', 486], ['30', 552], ['20', 568], ['0', 595]].forEach(([v, y]) => add('axes', 'text', { x: v === '100' || v === '0' ? 970 : 968, y: y + 4 }, v));

['4 Nov 2020', '5 Nov 04:00', '5 Nov 12:00', '5 Nov 20:00', '6 Nov 05:00', '6 Nov 13:00', '6 Nov 21:00', '9 Nov 06:00', '9 Nov 14:00', '9 Nov 22:00', '10 Nov 07:00', '10 Nov 15:00', '10 Nov 23:00'].forEach((t, i) => {
  const x = Math.round(189 + i * 63.4);
  tick(`M${x + 0.5} 601v4`);
  add('axes', 'text', { x: x - 1, y: 614 }, t);
});
```
